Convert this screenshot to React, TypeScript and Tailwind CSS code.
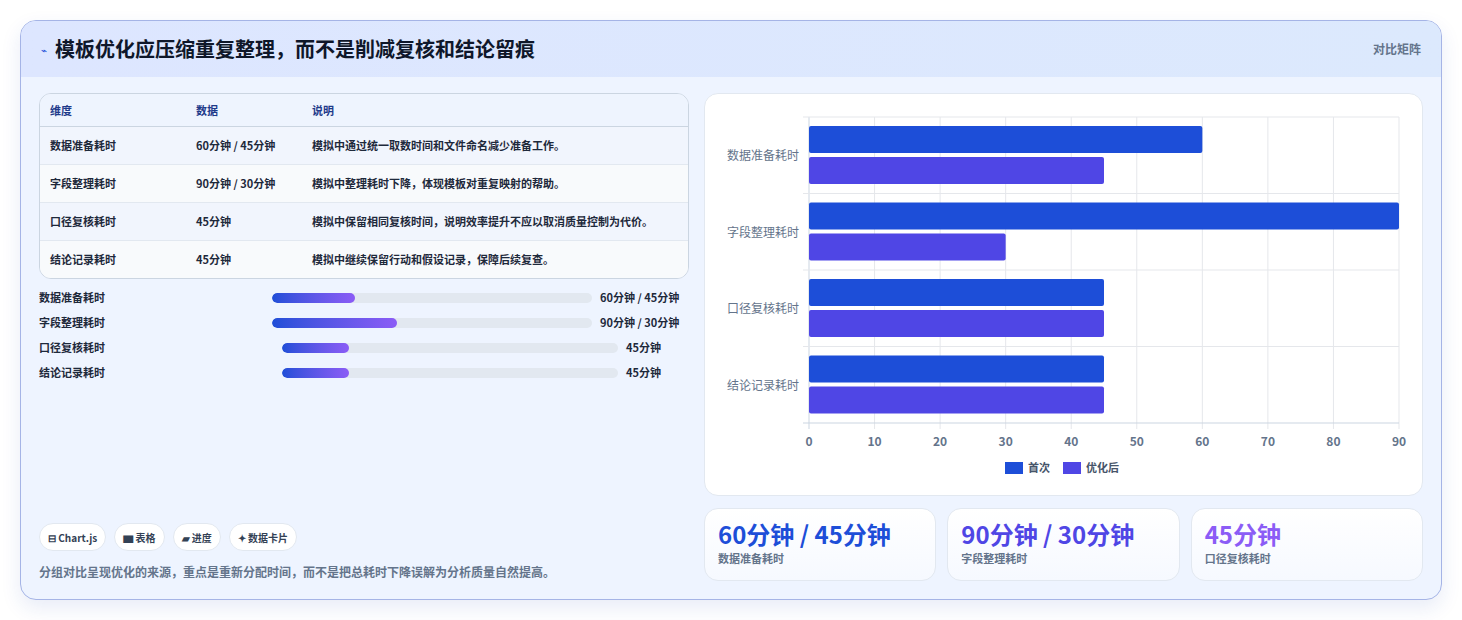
import React from "react";

const F = { fontFamily: '"Noto Sans CJK SC","Noto Sans",sans-serif' };

const rows = [
  ["数据准备耗时", "60分钟 / 45分钟", "模拟中通过统一取数时间和文件命名减少准备工作。"],
  ["字段整理耗时", "90分钟 / 30分钟", "模拟中整理耗时下降，体现模板对重复映射的帮助。"],
  ["口径复核耗时", "45分钟", "模拟中保留相同复核时间，说明效率提升不应以取消质量控制为代价。"],
  ["结论记录耗时", "45分钟", "模拟中继续保留行动和假设记录，保障后续复查。"],
];

function Chart() {
  const x0 = 104, x1 = 694, y0 = 23, band = 76.5;
  const sx = (v: number) => x0 + (v / 90) * (x1 - x0);
  const data = [[60, 45], [90, 30], [45, 45], [45, 45]];
  return (
    <svg width="717" height="402" style={F}>
      {Array.from({ length: 10 }).map((_, i) => (
        <line key={i} x1={sx(i * 10)} x2={sx(i * 10)} y1={y0} y2={y0 + band * 4 + 6} stroke={i === 0 ? "#cbd5e1" : "#e5e7eb"} />
      ))}
      {[0, 1, 2, 3, 4].map((i) => (
        <line key={i} x1={x0 - 6} x2={x1} y1={y0 + band * i} y2={y0 + band * i} stroke={i === 4 ? "#cbd5e1" : "#e5e7eb"} />
      ))}
      {data.map((d, i) => (
        <g key={i}>
          <rect x={x0} y={y0 + band * i + 9} width={sx(d[0]) - x0} height={27} rx={2} fill="#1d4ed8" />
          <rect x={x0} y={y0 + band * i + 40} width={sx(d[1]) - x0} height={27} rx={2} fill="#4f46e5" />
          <text x={x0 - 10} y={y0 + band * i + 43} textAnchor="end" fontSize="12" fill="#64748b">{rows[i][0]}</text>
        </g>
      ))}
      {Array.from({ length: 10 }).map((_, i) => (
        <text key={i} x={sx(i * 10)} y={352} textAnchor="middle" fontSize="12" fontWeight="600" fill="#64748b">{i * 10}</text>
      ))}
      <rect x={300} y={368} width={18} height={12} fill="#1d4ed8" />
      <text x={323} y={378} fontSize="11" fontWeight="600" fill="#475569">首次</text>
      <rect x={358} y={368} width={18} height={12} fill="#4f46e5" />
      <text x={381} y={378} fontSize="11" fontWeight="600" fill="#475569">优化后</text>
    </svg>
  );
}

const prog = [
  { l: "数据准备耗时", v: "60分钟 / 45分钟", p: 26, bar: "w-[320px]", gap: "ml-[233px]" },
  { l: "字段整理耗时", v: "90分钟 / 30分钟", p: 39, bar: "w-[320px]", gap: "ml-[233px]" },
  { l: "口径复核耗时", v: "45分钟", p: 20, bar: "w-[336px]", gap: "ml-[243px]" },
  { l: "结论记录耗时", v: "45分钟", p: 20, bar: "w-[336px]", gap: "ml-[243px]" },
];

export default function App() {
  return (
    <div className="w-[1462px] h-[620px] bg-white pt-[20px] pl-[20px]" style={F}>
      <div className="w-[1422px] h-[580px] rounded-[16px] border border-[#a5b4e6] bg-[#eef4ff] shadow-[0_8px_20px_rgba(30,64,175,0.1)] overflow-hidden flex flex-col">
        <div className="h-[56px] flex items-center justify-between px-[20px] bg-gradient-to-r from-[#dde6ff] to-[#dce9fd]">
          <div className="flex items-center gap-[8px]">
            <span className="text-[#1d4ed8] text-[10px]">⌁</span>
            <span className="text-[20px] font-bold text-[#0f172a]">模板优化应压缩重复整理，而不是削减复核和结论留痕</span>
          </div>
          <span className="text-[12px] text-[#64748b] font-semibold">对比矩阵</span>
        </div>
        <div className="flex-1 flex gap-[15px] px-[18px] pt-[16px] pb-[18px]">
          <div className="w-[651px] flex flex-col">
            <div className="rounded-[12px] border border-[#cbd5e1] overflow-hidden bg-[#f4f7fe] text-[11px] font-semibold">
              <div className="flex h-[33px] items-center bg-[#eef4fe] text-[#1e3a8a] border-b border-[#cbd5e1]">
                <div className="w-[156px] pl-[10px]">维度</div><div className="w-[116px]">数据</div><div>说明</div>
              </div>
              {rows.map((r, i) => (
                <div key={i} className={`flex py-[10px] text-[#1e293b] ${i % 2 ? "bg-[#f8fafc]" : "bg-[#f1f5fd]"} ${i < 3 ? "border-b border-[#e2e8f0]" : ""}`}>
                  <div className="w-[156px] pl-[10px] shrink-0">{r[0]}</div>
                  <div className="w-[116px] shrink-0">{r[1]}</div>
                  <div className="pr-[10px] leading-[17px]">{r[2]}</div>
                </div>
              ))}
            </div>
            <div className="flex flex-col gap-[8px] mt-[10px] text-[11px] font-semibold text-[#1e293b]">
              {prog.map((p, i) => (
                <div key={i} className="flex items-center h-[17px]">
                  <span className="w-0 whitespace-nowrap">{p.l}</span>
                  <div className={`${p.gap} ${p.bar} h-[10px] rounded-full bg-[#e2e8f0] overflow-hidden`}>
                    <div className="h-full rounded-full bg-gradient-to-r from-[#1d4ed8] to-[#8b5cf6]" style={{ width: `${p.p}%` }} />
                  </div>
                  <span className="ml-[8px] whitespace-nowrap">{p.v}</span>
                </div>
              ))}
            </div>
            <div className="mt-auto flex gap-[8px] text-[10px] font-semibold text-[#334155]">
              {["⊟ Chart.js", "▆ 表格", "▰ 进度", "✦ 数据卡片"].map((c) => (
                <span key={c} className="h-[28px] px-[8px] flex items-center rounded-full bg-white border border-[#e2e8f0]">{c}</span>
              ))}
            </div>
            <p className="mt-[12px] text-[12px] text-[#64748b] font-semibold">分组对比呈现优化的来源，重点是重新分配时间，而不是把总耗时下降误解为分析质量自然提高。</p>
          </div>
          <div className="flex-1 flex flex-col gap-[12px]">
            <div className="h-[403px] rounded-[14px] bg-white border border-[#e2e8f0]"><Chart /></div>
            <div className="flex gap-[11px]">
              {[["60分钟 / 45分钟", "text-[#1d4ed8]", "数据准备耗时"], ["90分钟 / 30分钟", "text-[#4f46e5]", "字段整理耗时"], ["45分钟", "text-[#8b5cf6]", "口径复核耗时"]].map((s) => (
                <div key={s[2]} className="flex-1 h-[73px] rounded-[14px] bg-gradient-to-b from-white to-[#f6f9ff] border border-[#e2e8f0] px-[13px] pt-[9px]">
                  <div className={`text-[24px] leading-[32px] font-bold ${s[1]}`}>{s[0]}</div>
                  <div className="text-[11px] text-[#64748b] font-semibold">{s[2]}</div>
                </div>
              ))}
            </div>
          </div>
        </div>
      </div>
    </div>
  );
}
